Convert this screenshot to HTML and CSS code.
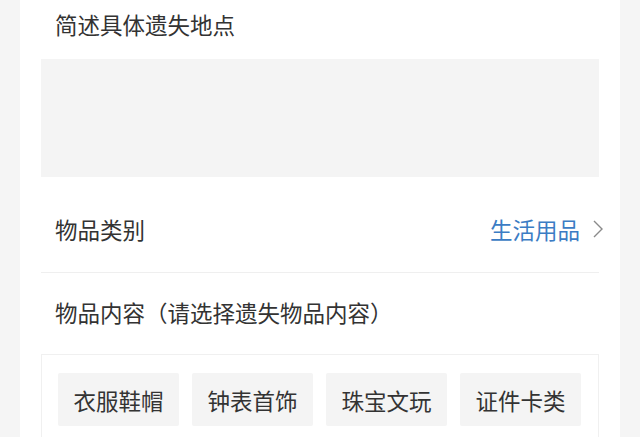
FILE: index.html
```html
<!DOCTYPE html>
<html lang="zh-CN">
<head>
<meta charset="utf-8">
<link rel="stylesheet" href="styles.css">
</head>
<body>
<div class="page">
  <div class="card">
    <div class="label title">简述具体遗失地点</div>
    <div class="textarea"></div>
    <div class="row">
      <div class="label">物品类别</div>
      <div class="value">
        <span class="blue">生活用品</span>
        <svg class="chev" width="10" height="18" viewBox="0 0 10 18"><path d="M1 1 L9 9 L1 17" fill="none" stroke="#8a8a8a" stroke-width="1.4"/></svg>
      </div>
    </div>
    <div class="label sub">物品内容（请选择遗失物品内容）</div>
    <div class="box">
      <div class="tag">衣服鞋帽</div>
      <div class="tag">钟表首饰</div>
      <div class="tag">珠宝文玩</div>
      <div class="tag">证件卡类</div>
    </div>
  </div>
</div>
</body>
</html>
```
FILE: styles.css
```css
* { box-sizing: border-box; }
html, body { margin: 0; padding: 0; }
body {
  background: #f5f5f5;
  font-family: "Noto Sans CJK SC", "Noto Sans", sans-serif;
  color: #333;
  overflow: hidden;
}
.page { padding: 0 20px; height: 437px; }
.card {
  background: #fff;
  height: 100%;
  padding: 0 21px;
}
.label {
  font-size: 22.5px;
  line-height: 30px;
  padding-left: 14px;
}
.title { padding-top: 9px; }
.textarea {
  margin-top: 20px;
  height: 118px;
  background: #f4f4f4;
}
.row {
  display: flex;
  justify-content: space-between;
  align-items: center;
  padding: 37px 0 28px;
  border-bottom: 1px solid #efefef;
}
.value { display: flex; align-items: center; gap: 13px; margin-right: -4px; }
.blue { color: #3b7cc4; font-size: 22.5px; line-height: 30px; }
.chev { display: block; }
.sub { padding-top: 24px; }
.box {
  margin-top: 27px;
  border: 1px solid #f0f0f0;
  border-bottom: none;
  padding: 18px 16px 20px;
  display: flex;
  gap: 13px;
}
.tag {
  width: 121px;
  height: 53px;
  background: #f4f4f4;
  border-radius: 2px;
  display: flex;
  align-items: center;
  justify-content: center;
  font-size: 22.5px;
  color: #333;
}
```
